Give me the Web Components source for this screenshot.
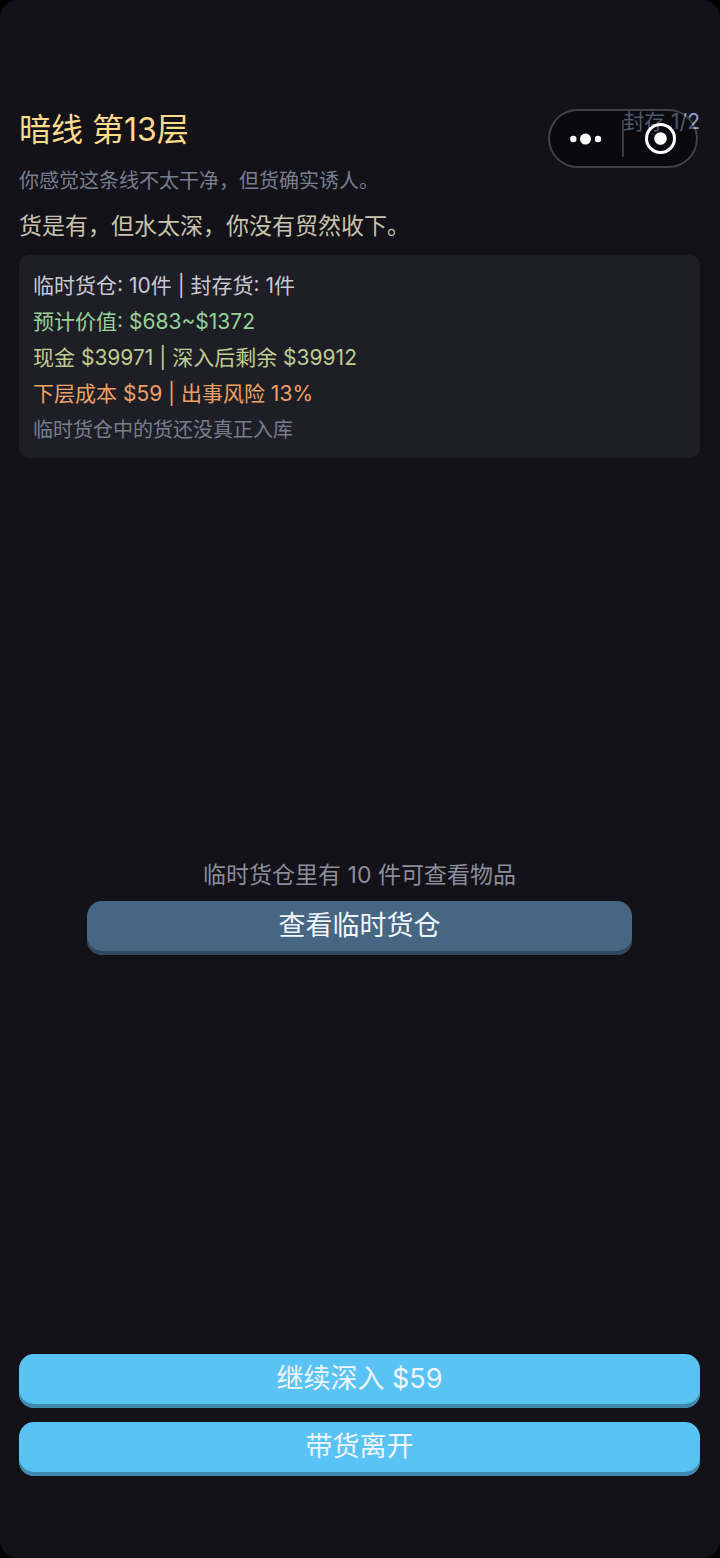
<!DOCTYPE html>
<html lang="zh-CN">
<head>
    <meta charset="UTF-8">
    <meta name="viewport" content="width=device-width, initial-scale=1.0">
    <title>暗线</title>
    <style>
        body {
            margin: 0;
            background: #000;
            color: #c8c8d2;
            font-family: Inter, "Noto Sans CJK SC", sans-serif;
        }
    </style>
</head>
<body>
    <game-screen>
        <layer-header slot="header" sealed="封存 1/2">
            暗线 第13层
            <span slot="hint">你感觉这条线不太干净，但货确实诱人。</span>
            <span slot="message">货是有，但水太深，你没有贸然收下。</span>
        </layer-header>
        <mini-capsule slot="capsule"></mini-capsule>
        <stat-panel slot="stats">
            <stat-line>临时货仓: 10件 | 封存货: 1件</stat-line>
            <stat-line tone="value">预计价值: $683~$1372</stat-line>
            <stat-line tone="cash">现金 $39971 | 深入后剩余 $39912</stat-line>
            <stat-line tone="risk">下层成本 $59 | 出事风险 13%</stat-line>
            <stat-line tone="note">临时货仓中的货还没真正入库</stat-line>
        </stat-panel>
        <stash-preview>
            临时货仓里有 10 件可查看物品
            <game-button slot="action" kind="muted">查看临时货仓</game-button>
        </stash-preview>
        <game-button slot="actions">继续深入 $59</game-button>
        <game-button slot="actions">带货离开</game-button>
    </game-screen>

    <script>
        class GameScreen extends HTMLElement {
            constructor() {
                super();
                this.attachShadow({ mode: "open" });

                this.shadowRoot.innerHTML = `
                    <style>
                        :host {
                            display: flex;
                            flex-direction: column;
                            position: relative;
                            box-sizing: border-box;
                            min-height: 100vh;
                            padding: 106px 20px 82px 19px;
                            background: #131218;
                            border-radius: 18px;
                        }

                        main {
                            flex: 1;
                            display: flex;
                            flex-direction: column;
                            justify-content: center;
                        }

                        footer {
                            display: flex;
                            flex-direction: column;
                            gap: 14px;
                        }
                    </style>
                    <slot name="header"></slot>
                    <slot name="capsule"></slot>
                    <slot name="stats"></slot>
                    <main><slot></slot></main>
                    <footer><slot name="actions"></slot></footer>
                `;
            }
        }
        customElements.define("game-screen", GameScreen);

        class LayerHeader extends HTMLElement {
            constructor() {
                super();
                this.attachShadow({ mode: "open" });

                this.shadowRoot.innerHTML = `
                    <style>
                        :host {
                            display: block;
                        }

                        .row {
                            display: flex;
                            justify-content: space-between;
                            align-items: flex-start;
                        }

                        h1 {
                            margin: 0;
                            font-size: 32px;
                            line-height: 48px;
                            font-weight: 400;
                            color: #ffdc8c;
                        }

                        .sealed {
                            font-size: 21px;
                            line-height: 32px;
                            color: #8ca0c8;
                        }

                        p {
                            margin: 0;
                        }

                        .hint {
                            margin-top: 9px;
                            font-size: 20px;
                            line-height: 36px;
                            color: #787e91;
                        }

                        .message {
                            margin-top: 9px;
                            font-size: 23px;
                            line-height: 36px;
                            color: #c8c3aa;
                        }
                    </style>
                    <div class="row">
                        <h1><slot></slot></h1>
                        <span class="sealed"></span>
                    </div>
                    <p class="hint"><slot name="hint"></slot></p>
                    <p class="message"><slot name="message"></slot></p>
                `;

                this.sealedElement = this.shadowRoot.querySelector(".sealed");
            }

            static get observedAttributes() {
                return ["sealed"];
            }

            attributeChangedCallback(name, oldValue, newValue) {
                if (name === "sealed") {
                    this.sealedElement.textContent = newValue || "";
                }
            }
        }
        customElements.define("layer-header", LayerHeader);

        class MiniCapsule extends HTMLElement {
            constructor() {
                super();
                this.attachShadow({ mode: "open" });

                // floats over the header, like the host app's own menu
                this.shadowRoot.innerHTML = `
                    <style>
                        :host {
                            position: absolute;
                            top: 109px;
                            right: 22px;
                            display: flex;
                            align-items: center;
                            box-sizing: border-box;
                            width: 150px;
                            height: 59px;
                            border: 2px solid rgba(255, 255, 255, 0.2);
                            border-radius: 30px;
                            background: rgba(0, 0, 0, 0.45);
                            background-clip: padding-box;
                        }

                        button {
                            flex: 1;
                            display: flex;
                            align-items: center;
                            justify-content: center;
                            height: 100%;
                            padding: 0;
                            border: none;
                            background: none;
                            cursor: pointer;
                        }

                        .divider {
                            width: 2px;
                            height: 37px;
                            background: rgba(255, 255, 255, 0.2);
                        }
                    </style>
                    <button type="button" aria-label="更多">
                        <svg width="32" height="12" viewBox="0 0 32 12" fill="#fff">
                            <circle cx="3.3" cy="6" r="3.2"/>
                            <circle cx="15.5" cy="6" r="5.5"/>
                            <circle cx="28" cy="6" r="3.2"/>
                        </svg>
                    </button>
                    <span class="divider"></span>
                    <button type="button" aria-label="关闭">
                        <svg width="32" height="32" viewBox="0 0 32 32">
                            <circle cx="16.5" cy="15.5" r="14" fill="none" stroke="#fff" stroke-width="3"/>
                            <circle cx="16.5" cy="15.5" r="6.3" fill="#fff"/>
                        </svg>
                    </button>
                `;
            }
        }
        customElements.define("mini-capsule", MiniCapsule);

        class StatPanel extends HTMLElement {
            constructor() {
                super();
                this.attachShadow({ mode: "open" });

                this.shadowRoot.innerHTML = `
                    <style>
                        :host {
                            display: block;
                            margin-top: 11px;
                            padding: 13px 14px 10px;
                            border-radius: 10px;
                            background: #1e1e26;
                        }
                    </style>
                    <slot></slot>
                `;
            }
        }
        customElements.define("stat-panel", StatPanel);

        class StatLine extends HTMLElement {
            constructor() {
                super();
                this.attachShadow({ mode: "open" });

                this.shadowRoot.innerHTML = `
                    <style>
                        :host {
                            display: block;
                            font-size: 21px;
                            line-height: 36px;
                            color: #c8c8d2;
                        }

                        :host([tone="value"]) {
                            color: #96d296;
                        }

                        :host([tone="cash"]) {
                            color: #becd91;
                        }

                        :host([tone="risk"]) {
                            color: #f0a064;
                        }

                        :host([tone="note"]) {
                            font-size: 20px;
                            color: #787e8c;
                        }
                    </style>
                    <slot></slot>
                `;
            }
        }
        customElements.define("stat-line", StatLine);

        class StashPreview extends HTMLElement {
            constructor() {
                super();
                this.attachShadow({ mode: "open" });

                this.shadowRoot.innerHTML = `
                    <style>
                        :host {
                            display: flex;
                            flex-direction: column;
                            align-items: center;
                            gap: 9px;
                        }

                        p {
                            margin: 0;
                            font-size: 23px;
                            line-height: 34px;
                            color: #8c8c9b;
                        }

                        .action {
                            width: 80%;
                        }
                    </style>
                    <p><slot></slot></p>
                    <div class="action"><slot name="action"></slot></div>
                `;
            }
        }
        customElements.define("stash-preview", StashPreview);

        class GameButton extends HTMLElement {
            constructor() {
                super();
                this.attachShadow({ mode: "open" });

                this.shadowRoot.innerHTML = `
                    <style>
                        :host {
                            display: block;
                            --face: #5ac3f5;
                            --edge: #4189ac;
                        }

                        :host([kind="muted"]) {
                            --face: #466682;
                            --edge: #31475b;
                        }

                        button {
                            display: block;
                            width: 100%;
                            height: 54px;
                            padding: 0 0 4px;
                            border: none;
                            border-radius: 15px;
                            background: var(--face);
                            box-shadow: inset 0 -4px 0 var(--edge);
                            color: #f0f5ff;
                            font-family: inherit;
                            font-size: 27px;
                            line-height: 40px;
                            cursor: pointer;
                        }

                        button:active {
                            box-shadow: none;
                        }
                    </style>
                    <button type="button"><slot></slot></button>
                `;
            }
        }
        customElements.define("game-button", GameButton);
    </script>
</body>
</html>
